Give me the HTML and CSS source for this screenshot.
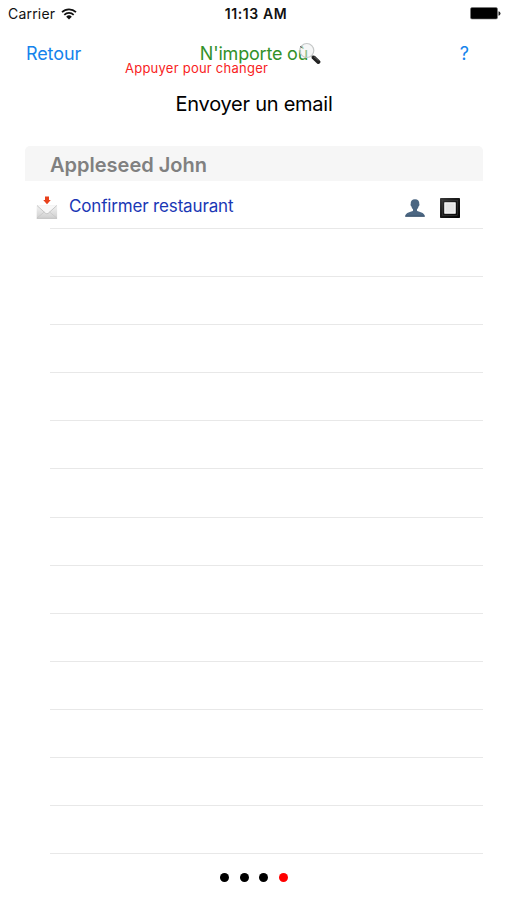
FILE: index.html
```html
<!DOCTYPE html>
<html lang="fr">
<head>
	<meta charset="utf-8">
	<title>Envoyer un email</title>
	<link rel="stylesheet" href="styles.css">
</head>
<body>
	<div class="status">
		<div class="carrier">
			<span>Carrier</span>
			<svg class="wifi" width="16" height="12" viewBox="0 0 16 12">
				<path d="M1 4.2a10 10 0 0 1 14 0M3.3 6.8a6.7 6.7 0 0 1 9.4 0" fill="none" stroke="#111" stroke-width="1.7"/>
				<path d="M5.2 8.7a4 4 0 0 1 5.6 0L8 11.6z" fill="#111"/>
			</svg>
		</div>
		<div class="clock">11:13 AM</div>
		<svg class="battery" width="31" height="13" viewBox="0 0 31 13">
			<rect x=".5" y=".5" width="27" height="11.5" rx="1.5" fill="#000" stroke="#777" stroke-width=".6"/>
			<path d="M28.5 4.2q2 .4 2 2.3t-2 2.3z" fill="#222"/>
		</svg>
	</div>

	<div class="nav">
		<a class="back">Retour</a>
		<div class="place">
			<span class="where">N'importe où</span>
			<svg class="search" width="23" height="23" viewBox="0 0 23 23">
				<path d="M13.5 13.5l2.5 2.5" stroke="#999" stroke-width="2"/>
				<path d="M15.7 15.6l4.7 4.3" stroke="#222" stroke-width="4" stroke-linecap="round"/>
				<path d="M16 14.7l4.5 4" stroke="#777" stroke-width=".7"/>
				<circle cx="8.8" cy="8.5" r="7" fill="#eef0f0" fill-opacity=".5" stroke="#c5c8c8" stroke-width="1.2"/>
				<path d="M2 4.5l2 1" stroke="#555" stroke-width="1"/>
			</svg>
		</div>
		<a class="help">?</a>
	</div>
	<div class="hint">Appuyer pour changer</div>

	<h1 class="title">Envoyer un email</h1>

	<div class="list">
		<div class="section">Appleseed John</div>
		<div class="row task">
			<svg class="mail" width="22" height="24" viewBox="0 0 22 24">
				<defs>
					<linearGradient id="paper" x1="0" y1="0" x2="0" y2="1">
						<stop offset="0" stop-color="#f4f4f4"/>
						<stop offset="1" stop-color="#cfcfcf"/>
					</linearGradient>
				</defs>
				<rect x=".7" y="9" width="20.4" height="13.6" rx="1" fill="url(#paper)"/>
				<path d="M1 9.5l8.6 7.8q1.3 1 2.6 0L20.8 9.5" fill="#f8f8f8" stroke="#bdbdbd" stroke-width=".8"/>
				<path d="M1 22l7.3-6M20.8 22l-7.3-6" stroke="#c4c4c4" stroke-width=".7"/>
				<path d="M.7 22.4h20.4" stroke="#bbb" stroke-width=".8"/>
				<path d="M9 .5h4V4h1.8L11 8.3 7.2 4H9z" fill="#e8411c"/>
			</svg>
			<span class="name">Confirmer restaurant</span>
			<svg class="person" width="20" height="18" viewBox="0 0 20 18">
				<path d="M10 .3c2.900 0 4.500 1.900 4.300 4.700.5.800 0 2-.8 2.400-.3 1.400-.8 2.100-1.500 2.800v1.500c1.500 1.400 7.600 1.300 7.800 5.800H.2c.2-4.500 6.300-4.400 7.800-5.800v-1.500c-.7-.7-1.200-1.400-1.500-2.800C5.700 7 5.200 5.800 5.700 5 5.500 2.200 7.100.3 10 .3z" fill="#4b6682"/>
				<path d="M.3 17.200h19.400" stroke="#344d67" stroke-width="1"/>
			</svg>
			<svg class="check" width="20" height="20" viewBox="0 0 20 20">
				<defs>
					<linearGradient id="frame" x1="0" y1="0" x2="1" y2="1">
						<stop offset="0" stop-color="#3a3a3a"/>
						<stop offset=".4" stop-color="#1c1c1c"/>
						<stop offset="1" stop-color="#000"/>
					</linearGradient>
				</defs>
				<rect width="20" height="20" rx=".7" fill="url(#frame)"/>
				<rect x="2.5" y="2.5" width="15" height="15" fill="none" stroke="#444" stroke-width=".5"/>
				<rect x="4.8" y="4.8" width="10.4" height="10.4" fill="#e5e5e5" stroke="#fff"/>
			</svg>
		</div>
		<div class="row"></div>
		<div class="row"></div>
		<div class="row"></div>
		<div class="row"></div>
		<div class="row"></div>
		<div class="row"></div>
		<div class="row"></div>
		<div class="row"></div>
		<div class="row"></div>
		<div class="row"></div>
		<div class="row"></div>
		<div class="row"></div>
		<div class="row"></div>
	</div>

	<div class="pages">
		<span class="dot"></span>
		<span class="dot"></span>
		<span class="dot"></span>
		<span class="dot current"></span>
	</div>
</body>
</html>
```

FILE: styles.css
```css
* {
	box-sizing: border-box;
}
body {
	margin: 0;
	height: 900px;
	overflow: hidden;
	background: #fff;
	color: #111;
	font-family: Inter, "Liberation Sans", sans-serif;
}
svg {
	display: block;
}
.status {
	display: grid;
	grid-template-columns: 1fr auto 1fr;
	align-items: center;
	height: 27px;
	padding: 0 6px 0 8px;
	font-size: 14px;
}
.carrier {
	display: flex;
	align-items: center;
	gap: 6px;
	letter-spacing: .2px;
}
.clock {
	padding-left: 3px;
	font-weight: 600;
	letter-spacing: .6px;
}
.battery {
	justify-self: end;
}
.nav {
	display: grid;
	grid-template-columns: 1fr auto 1fr;
	height: 35px;
	padding: 0 38px 0 26px;
	font-size: 18px;
	line-height: 54px;
}
.back,
.help {
	color: #1583ec;
}
.back {
	letter-spacing: -.1px;
}
.help {
	justify-self: end;
}
.place {
	position: relative;
	margin-left: 13px;
	color: #329129;
	letter-spacing: -.2px;
}
.search {
	position: absolute;
	right: -13px;
	top: 15px;
}
.hint {
	padding-left: 125px;
	font-size: 13px;
	line-height: 13px;
	letter-spacing: .24px;
	color: #f82222;
}
.title {
	margin: 17px 0 30px;
	padding-left: 1px;
	font-size: 20px;
	font-weight: 400;
	line-height: 24px;
	letter-spacing: -.25px;
	text-align: center;
	color: #000;
}
.list {
	margin: 0 24px 0 25px;
}
.section {
	height: 35px;
	padding-left: 25px;
	border-radius: 5px 5px 0 0;
	background: #f6f6f6;
	color: #808080;
	font-size: 20px;
	font-weight: 600;
	line-height: 38px;
}
.row {
	height: 48.08px;
	margin-left: 25px;
	border-bottom: 1px solid #e8e8e8;
}
.task {
	display: flex;
	align-items: center;
	padding: 7px 23px 0 0;
}
.mail {
	margin-left: -14px;
}
.name {
	flex: 1;
	margin: -4px 0 0 11px;
	color: #1a37b5;
	font-size: 17px;
	letter-spacing: -.16px;
}
.check {
	margin-left: 15px;
}
.pages {
	display: flex;
	justify-content: center;
	gap: 10.6px;
	padding: 19px 0 0 1px;
}
.dot {
	width: 9px;
	height: 9px;
	border-radius: 50%;
	background: #000;
}
.current {
	background: #f00;
}
```
